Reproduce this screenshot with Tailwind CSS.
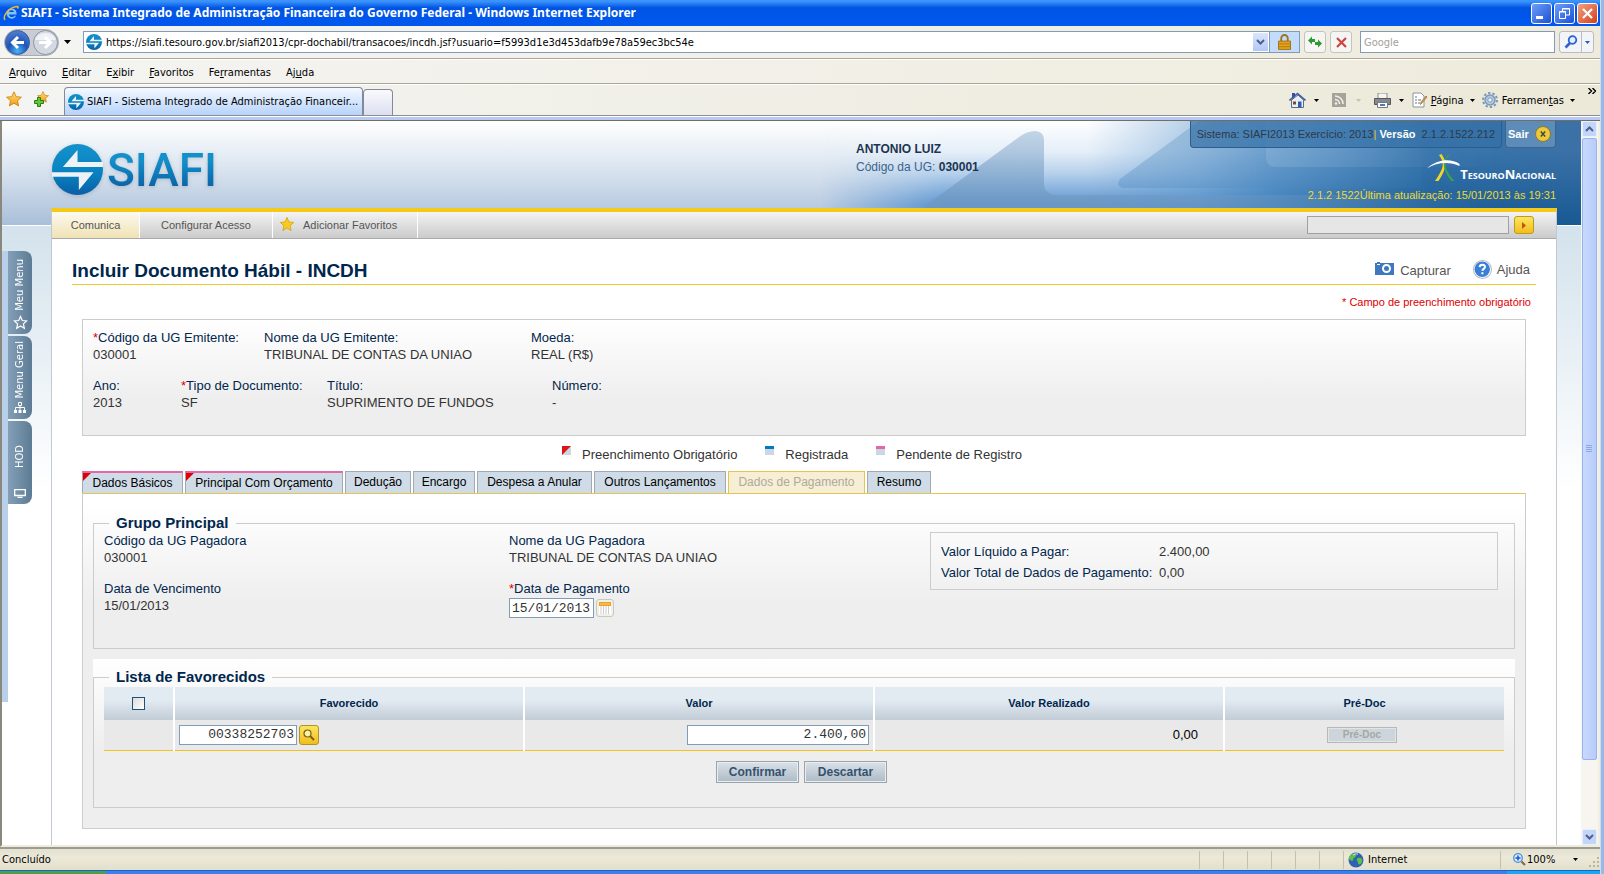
<!DOCTYPE html>
<html lang="pt-BR">
<head>
<meta charset="utf-8">
<title>SIAFI - Sistema Integrado de Administração Financeira do Governo Federal</title>
<script src="https://cdn.jsdelivr.net/npm/@tailwindcss/browser@4"></script>
</head>
<body class="flex h-screen overflow-hidden bg-[#9ab8e4] font-['Liberation_Sans',Arial,sans-serif] text-[13px] leading-[17px] text-[#333]">
<svg class="absolute size-0" aria-hidden="true">
  <defs>
    <linearGradient id="orb" x1="0" y1="0" x2="0" y2="1"><stop offset="0" stop-color="#1492cc"/><stop offset="0.6" stop-color="#0880bf"/><stop offset="1" stop-color="#0a5ea6"/></linearGradient>
    <linearGradient id="star" x1="0" y1="0" x2="0" y2="1"><stop offset="0" stop-color="#ffe07a"/><stop offset="1" stop-color="#f59a12"/></linearGradient>
    <symbol id="siafi" viewBox="0 0 50 50">
      <circle cx="25" cy="25" r="25" fill="url(#orb)"/>
      <path d="M10.700 22.500 L25 6 V17.700 H50 V22.500Z M0 27.700 H40.700 L26.300 45 V32 H0Z" fill="#edf2f7"/>
    </symbol>
    <symbol id="favstar" viewBox="0 0 16 16"><path d="M8 .8l2.200 4.900 5.200.5-3.900 3.500 1.100 5.200L8 12.200l-4.600 2.700 1.100-5.200L.6 6.200l5.200-.5z" fill="url(#star)" stroke="#c98412" stroke-width=".9"/></symbol>
    <symbol id="caret" viewBox="0 0 7 4"><path d="M0 0h7L3.500 4z" fill="currentColor"/></symbol>
  </defs>
</svg>

<div class="flex min-w-0 flex-1 flex-col bg-[#ece9d8]">
  <!-- Window title bar -->
  <div class="flex h-[26px] shrink-0 items-center bg-linear-to-b from-[#3b93fd] from-5% via-[#0054e3] via-30% to-[#0058f0] pl-[3px] pr-[2px]">
    <svg class="size-4" viewBox="0 0 16 16"><path d="M13.500 9.500H6c.2 3 4.400 3.300 5.500 1.300H13c-2 4.600-9.300 3.500-9.300-2.500S12.800 2 13.500 7.500zM6 7h5c-.3-2.500-4.600-2.500-5 0z" fill="#7fc4f6"/><path d="M2 15C-.5 12 5 2 14.500 1.500c1 .3.500 1.500 0 2" fill="none" stroke="#e2b93c" stroke-width="1.500"/></svg>
    <h1 class="ml-[2px] flex-1 truncate font-['Noto_Sans','Open_Sans',sans-serif] text-[12px] font-bold leading-[20px] text-white">SIAFI - Sistema Integrado de Administração Financeira do Governo Federal - Windows Internet Explorer</h1>
    <div class="flex gap-[2px]">
      <button type="button" aria-label="Minimizar" class="size-[21px] rounded-[3px] border border-white bg-linear-to-br from-[#6f9df7] to-[#1c4fd6]"><svg class="size-full" viewBox="0 0 19 19"><path d="M4 12h7v3H4z" fill="#fff"/></svg></button>
      <button type="button" aria-label="Restaurar" class="size-[21px] rounded-[3px] border border-white bg-linear-to-br from-[#6f9df7] to-[#1c4fd6]"><svg class="size-full" viewBox="0 0 19 19" fill="none" stroke="#fff"><path d="M4.500 7.500h6v7h-6zM4 8h7M7.500 7V4.500h7v6.500H11M7 5h8" /></svg></button>
      <button type="button" aria-label="Fechar" class="size-[21px] rounded-[3px] border border-white bg-linear-to-br from-[#f0a080] to-[#d23a14]"><svg class="size-full" viewBox="0 0 19 19"><path d="M5 5l9 9M14 5l-9 9" stroke="#fff" stroke-width="2.200"/></svg></button>
    </div>
  </div>

  <!-- Address bar -->
  <div class="flex h-[33px] shrink-0 items-center border-b border-[#aca899] bg-linear-to-r from-[#f4f4f2] to-[#efebdc] pl-[4px] pr-[6px] font-['DejaVu_Sans_Condensed','DejaVu_Sans',sans-serif] text-[11px] text-black">
    <div class="flex items-center rounded-full border border-[#a9adb3] bg-[#c9cdd3]">
      <button type="button" aria-label="Voltar" class="size-[25px]"><svg viewBox="0 0 25 25"><defs><radialGradient id="bk" cx=".5" cy=".85" r=".9"><stop offset="0" stop-color="#4bb4f4"/><stop offset=".45" stop-color="#1c55b8"/><stop offset="1" stop-color="#5b86d2"/></radialGradient></defs><circle cx="12.500" cy="12.500" r="12" fill="url(#bk)" stroke="#3a5c9e"/><path d="M19 12.500H8M13 7l-5.500 5.500L13 18" fill="none" stroke="#fff" stroke-width="3"/></svg></button>
      <button type="button" aria-label="Avançar" class="ml-[3px] size-[25px]"><svg viewBox="0 0 25 25"><circle cx="12.500" cy="12.500" r="12" fill="#d3d9e2" stroke="#8d949e"/><path d="M2 10a11 10 0 0 1 21 0z" fill="#eff2f6"/><path d="M6 12.500H17M12 7l5.500 5.500L12 18" fill="none" stroke="#fff" stroke-width="3"/></svg></button>
    </div>
    <svg class="ml-[5px] h-[4px] w-[7px]"><use href="#caret"/></svg>
    <div class="ml-[12px] flex h-[22px] flex-1 items-center border border-[#7f9db9] bg-white pl-[2px]">
      <svg class="size-4"><use href="#siafi"/></svg>
      <input aria-label="Endereço" class="ml-1 min-w-0 flex-1 outline-none" value="https://siafi.tesouro.gov.br/siafi2013/cpr-dochabil/transacoes/incdh.jsf?usuario=f5993d1e3d453dafb9e78a59ec3bc54e">
      <button type="button" aria-label="Abrir lista" class="flex h-[18px] w-[15px] items-center justify-center bg-linear-to-b from-[#dbe5fd] to-[#b3c8f6]"><svg class="h-[6px] w-[9px]" viewBox="0 0 9 6"><path d="M1 1l3.500 3.500L8 1" fill="none" stroke="#4d6185" stroke-width="2"/></svg></button>
      <div class="ml-[1px] flex h-full w-[30px] items-center justify-center border-l border-[#7f9db9] bg-[#c4dcfb]"><svg class="h-[16px] w-[13px]" viewBox="0 0 14 17"><path d="M3.500 8V4.500a3.500 3.500 0 0 1 7 0V8" fill="none" stroke="#9c7420" stroke-width="2"/><path d="M.5 7.500h13v9H.5z" fill="#e2a31a" stroke="#a06d10"/><path d="M1 10.500h12M1 13.500h12" stroke="#b57a12"/></svg></div>
    </div>
    <button type="button" aria-label="Atualizar" class="ml-[4px] flex size-[22px] items-center justify-center rounded-[3px] border border-[#c3c3c0] bg-[#f5f5f3]"><svg class="h-[12px] w-[14px]" viewBox="0 0 14 12" fill="#2e9a2e"><path d="M0 4L4 0V2.500H6.500V.5H4.500V8z" opacity="0"/><path d="M0 4.500L4 .5V3h3v3H4v2.500zM14 7.500L10 3.500V6H7v3h3v2.500z"/></svg></button>
    <button type="button" aria-label="Parar" class="ml-[4px] flex size-[22px] items-center justify-center rounded-[3px] border border-[#c3c3c0] bg-[#f5f5f3]"><svg class="size-[11px]" viewBox="0 0 11 11"><path d="M1 1l9 9M10 1L1 10" stroke="#cf4444" stroke-width="2.200"/></svg></button>
    <input aria-label="Pesquisa" placeholder="Google" class="ml-[8px] h-[22px] w-[195px] border border-[#7f9db9] bg-white px-[3px] placeholder:text-[#a3a09a]">
    <div class="ml-[4px] flex h-[22px] rounded-[3px] border border-[#b9bcc4] bg-[#f2f4f8]">
      <button type="button" aria-label="Pesquisar" class="flex w-[21px] items-center justify-center"><svg class="size-[14px]" viewBox="0 0 14 14"><circle cx="8.500" cy="5" r="3.800" fill="#e4efff" stroke="#2d62cf" stroke-width="1.800"/><path d="M6 8l-4.500 4.500" stroke="#2d62cf" stroke-width="2.600"/></svg></button>
      <button type="button" aria-label="Opções de pesquisa" class="flex w-[12px] items-center justify-center border-l border-[#b9bcc4] text-[#2457c5]"><svg class="h-[3px] w-[5px]" viewBox="0 0 7 4"><use href="#caret"/></svg></button>
    </div>
  </div>

  <!-- Menu bar -->
  <nav class="flex h-[25px] shrink-0 items-center gap-[15px] border-b border-t border-b-[#aca899] border-t-white bg-linear-to-r from-[#f4f4f2] to-[#efebdc] pl-[9px] pt-px font-['DejaVu_Sans_Condensed','DejaVu_Sans',sans-serif] text-[11px] text-black">
    <a href="#"><u>A</u>rquivo</a><a href="#"><u>E</u>ditar</a><a href="#">E<u>x</u>ibir</a><a href="#"><u>F</u>avoritos</a><a href="#">Fe<u>r</u>ramentas</a><a href="#">Aj<u>u</u>da</a>
  </nav>

  <!-- Browser tabs and command bar -->
  <div class="flex h-[32px] shrink-0 items-end border-b border-t border-b-[#8f8f8f] border-t-white bg-linear-to-r from-[#f4f4f2] to-[#ece9d8] pl-[6px] pr-[4px] font-['DejaVu_Sans_Condensed','DejaVu_Sans',sans-serif] text-[11px] text-black">
    <svg class="mb-2 size-4"><use href="#favstar"/></svg>
    <svg class="mb-2 ml-[11px] size-4" viewBox="0 0 16 16"><use href="#favstar" x="4" y="0" width="12" height="12"/><path d="M4.500 6.500h3v3h3v3h-3v3h-3v-3h-3v-3h3z" fill="#62c63a" stroke="#2b7d16"/></svg>
    <div class="ml-[15px] flex h-[28px] w-[299px] items-center rounded-t-[4px] border border-b-0 border-[#84889a] bg-linear-to-b from-[#f4f9ff] to-[#b6d3fb] pl-[3px]">
      <svg class="size-4"><use href="#siafi"/></svg>
      <span class="ml-[3px] truncate">SIAFI - Sistema Integrado de Administração Financeir...</span>
    </div>
    <button type="button" aria-label="Nova guia" class="h-[26px] w-[30px] rounded-t-[4px] border border-b-0 border-[#84889a] bg-linear-to-b from-[#fafafd] to-[#dcdff0]"></button>
    <div class="ml-auto flex items-center pb-[3px]">
      <svg class="size-[17px]" viewBox="0 0 17 17"><path d="M2.500 8v7.500h12V8L9 3z" fill="#e9edf4" stroke="#5c6c88"/><path d="M.5 8.500L8.500 1.500l8 7" fill="none" stroke="#3f5c9c" stroke-width="1.600"/><path d="M3 1h3v3L3 6z" fill="#3a4ea0"/><path d="M9 9.500h3.500v6H9z" fill="#2d5fa8"/><path d="M4 9.500h3v3H4z" fill="#7a4c38"/></svg>
      <svg class="ml-[8px] h-[3px] w-[5px]"><use href="#caret"/></svg>
      <svg class="ml-[13px] size-[14px]" viewBox="0 0 14 14"><path d="M0 0h14v14H0z" fill="#a5a49c"/><path d="M3 3a8 8 0 0 1 8 8M3 6.500a4.500 4.500 0 0 1 4.500 4.500" fill="none" stroke="#f3f1e8" stroke-width="1.500"/><circle cx="4" cy="10.500" r="1.200" fill="#f3f1e8"/></svg>
      <svg class="ml-[10px] h-[3px] w-[5px] text-[#c5c2b4]"><use href="#caret"/></svg>
      <svg class="ml-[13px] h-[15px] w-[17px]" viewBox="0 0 17 15"><path d="M4 0h9v6H4z" fill="#f5f5f5" stroke="#8a8a8a"/><path d="M.5 5.500h16v6H.5z" fill="#85888c" stroke="#55585c"/><path d="M3.500 9.500h10v5h-10z" fill="#fff" stroke="#77797c"/><path d="M6 12h5" stroke="#4e79c0" stroke-width="2"/></svg>
      <svg class="ml-[8px] h-[3px] w-[5px]"><use href="#caret"/></svg>
      <svg class="ml-[8px] size-4" viewBox="0 0 16 16"><path d="M1 1h8l3 3v11H1z" fill="#fff" stroke="#8f939b"/><path d="M3 5h2M3 8h2M3 11h2M6 8h3M6 11h2" stroke="#63738f"/><path d="M15 5l-5 6-1.500 1.500L9 10l5-6z" fill="#e2a64c" stroke="#8d6a33" stroke-width=".7"/></svg>
      <a href="#" class="ml-[3px]"><u>P</u>ágina</a>
      <svg class="ml-[6px] h-[3px] w-[5px]"><use href="#caret"/></svg>
      <svg class="ml-[7px] size-4" viewBox="0 0 16 16"><circle cx="8" cy="8" r="7" fill="none" stroke="#7f97b3" stroke-width="2" stroke-dasharray="2.400 2"/><circle cx="8" cy="8" r="5" fill="#a9cdec" stroke="#7f97b3" stroke-width="1.500"/><circle cx="8" cy="8" r="2.200" fill="#f3f1e8" stroke="#7f97b3"/></svg>
      <a href="#" class="ml-[4px]">Ferramen<u>t</u>as</a>
      <svg class="ml-[6px] h-[3px] w-[5px]"><use href="#caret"/></svg>
      <svg class="mb-[18px] ml-[13px] h-[6px] w-[8px]" viewBox="0 0 8 6"><path d="M.5 0l3 3-3 3M4.500 0l3 3-3 3" fill="none" stroke="#000" stroke-width="1.400"/></svg>
    </div>
  </div>
  <div class="h-[5px] shrink-0 border-b border-t border-b-[#716f64] border-t-white bg-[#b8c9f4]"></div>

  <!-- Page viewport -->
  <div class="flex min-h-0 flex-1 border-x-2 border-b-2 border-b-[#eeecdf] border-l-[#8a887c] border-r-[#f1efe2]">
    <div class="relative flex min-w-0 flex-1 overflow-hidden bg-linear-to-b from-[#d3e2ec] from-[104px] to-white to-[370px]">
      <div class="absolute inset-x-0 top-0 h-[105px] border-b border-white bg-linear-to-b from-white via-[#dbe5f0] via-45% to-[#a9bfd9]">
        <svg class="absolute right-0 top-0 h-[104px] w-[760px]" viewBox="0 0 760 104" preserveAspectRatio="none">
          <defs>
            <linearGradient id="sky" x1="0" y1="0" x2="0" y2="1"><stop offset="0" stop-color="#fff"/><stop offset=".3" stop-color="#e4eef8"/><stop offset=".5" stop-color="#b7d1ec"/><stop offset=".8" stop-color="#5e96d0"/><stop offset="1" stop-color="#5a94cc"/></linearGradient>
            <linearGradient id="fade"><stop offset="0" stop-color="#000"/><stop offset=".16" stop-color="#fff"/></linearGradient>
            <linearGradient id="deep"><stop offset=".35" stop-color="#5b97cf" stop-opacity="0"/><stop offset=".6" stop-color="#4788c2" stop-opacity=".75"/><stop offset=".8" stop-color="#3674ac"/><stop offset="1" stop-color="#3b71a6"/></linearGradient>
            <linearGradient id="low" x1="0" y1="0" x2="0" y2="1"><stop offset=".3" stop-color="#125590" stop-opacity="0"/><stop offset="1" stop-color="#125590" stop-opacity=".85"/></linearGradient>
            <linearGradient id="lowx"><stop offset=".5" stop-color="#000"/><stop offset=".85" stop-color="#fff"/></linearGradient>
            <linearGradient id="glass" x1="0" y1="0" x2="0" y2="1"><stop offset="0" stop-color="#fff" stop-opacity=".12"/><stop offset="1" stop-color="#fff" stop-opacity=".22"/></linearGradient>
            <linearGradient id="hill" x1="0" y1="0" x2="0" y2="1"><stop offset="0" stop-color="#7ea4c8" stop-opacity=".42"/><stop offset="1" stop-color="#6b95bf" stop-opacity=".8"/></linearGradient>
            <linearGradient id="hillfade"><stop offset=".35" stop-color="#fff"/><stop offset=".9" stop-color="#000"/></linearGradient>
            <mask id="m1"><path d="M0 0h760v104H0z" fill="url(#fade)"/></mask>
            <mask id="m2"><path d="M0 0h760v104H0z" fill="url(#lowx)"/></mask>
            <mask id="m3"><path d="M0 0h760v104H0z" fill="url(#hillfade)"/></mask>
          </defs>
          <path d="M0 0h760v104H0z" fill="url(#sky)" mask="url(#m1)"/>
          <path d="M0 0h760v104H0z" fill="url(#deep)"/>
          <path d="M0 0h760v104H0z" fill="url(#low)" mask="url(#m2)"/>
          <path d="M82 104 L100 88 L198 16 Q206 10 214 10 Q223 10 223 20 V62 Q223 74 236 74 H760 V104z" fill="url(#hill)" mask="url(#m3)"/>
          <path d="M378 0 L299 58 Q294 66 303 67 H600 V0z" fill="#4f89be" opacity=".38" mask="url(#m3)"/>
          <path d="M445 0 V36 Q445 46 455 46 H700 V0z" fill="url(#glass)" mask="url(#m3)"/>
        </svg>
      </div>

      <!-- Side menu -->
      <aside class="relative w-[49px] shrink-0 pt-[130px] font-['DejaVu_Sans',Verdana,sans-serif] text-[10px] leading-[14px] text-white">
        <div class="flex h-[451px] w-[30px] flex-col gap-[2px] border-l-[6px] border-[#b9d0ea] text-center">
          <a href="#" class="flex h-[83px] flex-col items-center justify-between rounded-r-[8px] bg-linear-to-r from-[#84a0b8] to-[#5d7b94] pb-1 pt-[8px]"><span class="rotate-180 [writing-mode:vertical-rl]">Meu Menu</span><svg class="size-[15px]" viewBox="0 0 15 15"><path d="M7.500 1.500l1.800 4 4.300.5-3.200 2.900.9 4.300-3.800-2.200-3.800 2.200.9-4.300L1.400 6l4.300-.5z" fill="none" stroke="#fff" stroke-width="1.200"/></svg></a>
          <a href="#" class="flex h-[83px] flex-col items-center justify-between rounded-r-[8px] bg-linear-to-r from-[#84a0b8] to-[#5d7b94] pb-[5px] pt-[5px]"><span class="rotate-180 [writing-mode:vertical-rl]">Menu Geral</span><svg class="h-[12px] w-[14px]" viewBox="0 0 14 12"><path d="M5.500.5h3v3h-3zM7 3.500V8M2.500 8V5.500h9V8" fill="none" stroke="#fff"/><path d="M1 8h3v3H1zM5.500 8h3v3h-3zM10 8h3v3h-3z" fill="#fff"/></svg></a>
          <a href="#" class="flex h-[83px] flex-col items-center justify-between rounded-r-[8px] bg-linear-to-r from-[#84a0b8] to-[#5d7b94] pb-[6px] pt-[24px]"><span class="rotate-180 [writing-mode:vertical-rl]">HOD</span><svg class="h-[9px] w-[12px]" viewBox="0 0 12 9"><path d="M.7.700h10.600v5.800H.7zM3.500 8.300h5" fill="none" stroke="#fff" stroke-width="1.300"/></svg></a>
        </div>
      </aside>

      <main class="relative flex min-w-0 flex-1 flex-col">
        <header class="flex h-[87px] shrink-0 pr-px text-[12px] leading-[18px]">
          <a href="#" aria-label="SIAFI" class="flex w-[805px] shrink pl-[1px] pt-[23px]">
            <svg class="size-[51px] shrink-0 drop-shadow-sm"><use href="#siafi"/></svg>
            <span class="ml-[4px] h-[54px] bg-linear-to-b from-[#1390cb] from-30% to-[#0a5298] bg-clip-text font-['Roboto',sans-serif] text-[46px] font-medium leading-[52px] text-transparent drop-shadow-sm">SIAFI</span>
          </a>
          <div class="pt-[19px] font-bold text-[#1c3551]">
            <p>ANTONIO LUIZ</p>
            <p><span class="font-normal text-[#3c648c]">Código da UG:</span> 030001</p>
          </div>
          <div class="ml-auto flex flex-col items-end">
            <div class="flex gap-[3px] leading-[20px]">
              <p class="h-[27px] rounded-b-[4px] border border-t-0 border-[#2d5d8c] bg-[#3470a6]/70 px-[6px] pt-[3px] text-[11px] text-[#2b3b4b]">Sistema: SIAFI2013 Exercício: 2013<span class="text-[#e5c62c]">|</span> <b class="text-white">Versão</b>&nbsp; 2.1.2.1522.212</p>
              <button type="button" class="flex h-[27px] w-[51px] items-start justify-between rounded-b-[4px] border border-t-0 border-[#3a658f] bg-[#5e8cb8] pl-[2px] pr-[4px] pt-[3px] text-[11px] font-bold leading-[20px] text-white">Sair <svg class="mt-[2px] size-[16px]" viewBox="0 0 16 16"><circle cx="8" cy="8" r="7.500" fill="#ecc93a" stroke="#8c7a2c"/><path d="M5.800 5.500l4.400 5M10.200 5.500l-4.400 5" stroke="#444" stroke-width="1.400"/></svg></button>
            </div>
            <div class="mt-[6px] flex h-[28px] items-end text-white">
              <svg class="h-[28px] w-[33px]" viewBox="0 0 33 28"><path d="M12 1C18 9 17 14 8 27h3.500C20 14 20 8 14.500 0z" fill="#f5d327"/><path d="M23.500 0c-8 7-7 14 4 27H24C15 14 15 8 21 1z" fill="#39a544"/><path d="M0 14.500C10 5 24 4 32.500 10v2C24 8 11 7 0 14.500z" fill="#fff"/></svg>
              <b class="font-['Open_Sans',sans-serif] text-[13px] leading-[16px] [font-variant:small-caps]">TesouroNacional</b>
            </div>
            <p class="mt-[6px] text-[11px] leading-[14px] text-[#ecd92f]">2.1.2 1522Última atualização: 15/01/2013 às 19:31</p>
          </div>
        </header>

        <div class="flex-1 border-x border-t-4 border-x-[#c3c9d0] border-t-[#f5c917] bg-white">
          <nav class="flex h-[27px] items-center border-b border-[#aaa] bg-linear-to-b from-[#f3f3f3] to-[#cbcbcb] text-[11px] text-[#555]">
            <a href="#" class="flex h-full w-[88px] items-center justify-center border-r border-white bg-linear-to-b from-[#fdfaf0] to-[#efe2b4] pt-px">Comunica</a>
            <a href="#" class="flex h-full w-[133px] items-center justify-center border-r border-white pt-px">Configurar Acesso</a>
            <a href="#" class="flex h-full w-[145px] items-center border-r border-white pl-[7px] pt-px"><svg class="mb-1 size-[14px]" viewBox="0 0 16 16"><path d="M8 .5l2.200 5.200 5.500.5-4.200 3.700 1.300 5.600L8 12.500l-4.800 3 1.300-5.600L.3 6.200l5.500-.5z" fill="#f7cc1f" stroke="#d9a514"/></svg><span class="ml-[9px]">Adicionar Favoritos</span></a>
            <form class="ml-auto flex items-center gap-[5px] pr-[22px]">
              <input aria-label="Busca" class="h-[18px] w-[202px] border border-[#a0a0a0] bg-[#e6e6e6]">
              <button type="button" aria-label="Buscar" class="flex h-[18px] w-[20px] items-center justify-center rounded-[3px] border border-[#bf9a1c] bg-linear-to-b from-[#fbe65c] to-[#f2bd16]"><svg class="h-[7px] w-[4px]" viewBox="0 0 4 7"><path d="M0 0l4 3.500L0 7z" fill="#c8500e"/></svg></button>
            </form>
          </nav>

          <div class="px-[20px]">
            <div class="flex h-[46px] items-end border-b border-[#f0c82d] pb-[3px] text-[#555]">
              <h2 class="flex-1 text-[19px] font-bold leading-[20px] text-[#00264d]">Incluir Documento Hábil - INCDH</h2>
              <a href="#" class="mb-[2px] flex items-center"><svg class="mb-1 mr-[6px] h-[13px] w-[19px]" viewBox="0 0 19 13"><path d="M0 1h2V0h3v1h14v12H0z" fill="#3e79bd"/><path d="M2 2.500h3" stroke="#fff"/><circle cx="11.500" cy="6.500" r="3.500" fill="#3e79bd" stroke="#fff" stroke-width="2"/></svg>Capturar</a>
              <a href="#" class="mb-[2px] ml-[22px] mr-[6px] flex items-center"><svg class="mr-[5px] size-[19px]" viewBox="0 0 18 18"><circle cx="9" cy="9" r="8.500" fill="#fff" stroke="#b5bac2"/><circle cx="8.800" cy="8.800" r="7.300" fill="#3a7fd6"/><path d="M6.300 6.800c.2-3.400 5.400-3 5 0-.2 1.600-2.300 1.600-2.400 3.400M8.900 11.600v1.900" fill="none" stroke="#fff" stroke-width="1.900"/></svg>Ajuda</a>
            </div>
            <p class="pr-[5px] pt-[9px] text-right text-[11px] leading-[16px] text-[#dc0000]">* Campo de preenchimento obrigatório</p>

            <section class="mx-[10px] mt-[9px] border border-[#ccc] bg-linear-to-b from-white to-[#eee] to-70% px-[10px] pb-[24px] pt-[9px]">
              <dl class="flex">
                <div class="w-[171px]"><dt class="text-[#00264d]"><span class="text-[#e00000]">*</span>Código da UG Emitente:</dt><dd>030001</dd></div>
                <div class="w-[267px]"><dt class="text-[#00264d]">Nome da UG Emitente:</dt><dd>TRIBUNAL DE CONTAS DA UNIAO</dd></div>
                <div><dt class="text-[#00264d]">Moeda:</dt><dd>REAL (R$)</dd></div>
              </dl>
              <dl class="mt-[14px] flex">
                <div class="w-[88px]"><dt class="text-[#00264d]">Ano:</dt><dd>2013</dd></div>
                <div class="w-[146px]"><dt class="text-[#00264d]"><span class="text-[#e00000]">*</span>Tipo de Documento:</dt><dd>SF</dd></div>
                <div class="w-[225px]"><dt class="text-[#00264d]">Título:</dt><dd>SUPRIMENTO DE FUNDOS</dd></div>
                <div><dt class="text-[#00264d]">Número:</dt><dd>-</dd></div>
              </dl>
            </section>

            <ul class="mt-[9px] flex justify-center gap-[28px] pr-[24px] leading-[19px]">
              <li class="flex gap-[11px]"><svg class="mt-[1px] size-[9px]" viewBox="0 0 9 9"><path d="M0 0h9v9H0z" fill="#cbd8e4"/><path d="M0 0h9L0 9z" fill="#e01414"/></svg>Preenchimento Obrigatório</li>
              <li class="flex gap-[11px]"><svg class="mt-[1px] size-[9px]" viewBox="0 0 9 9"><path d="M0 0h9v9H0z" fill="#cbd8e4"/><path d="M0 0h9v3H0z" fill="#007ac2"/></svg>Registrada</li>
              <li class="flex gap-[11px]"><svg class="mt-[1px] size-[9px]" viewBox="0 0 9 9"><path d="M0 0h9v9H0z" fill="#cbd8e4"/><path d="M0 0h9v3H0z" fill="#e468a8"/></svg>Pendente de Registro</li>
            </ul>

            <div role="tablist" class="mx-[10px] mt-[7px] flex gap-[2px] text-[12px] text-black">
              <button type="button" role="tab" class="relative h-[22px] w-[101px] border-x border-t-2 border-x-[#a3a9b1] border-t-[#e468a8] bg-[#cfdbe7]"><svg class="absolute left-0 top-0 size-[8px]" viewBox="0 0 8 8"><path d="M0 0h8L0 8z" fill="#e00000"/></svg>Dados Básicos</button>
              <button type="button" role="tab" class="relative h-[22px] w-[158px] border-x border-t-2 border-x-[#a3a9b1] border-t-[#e468a8] bg-[#cfdbe7]"><svg class="absolute left-0 top-0 size-[8px]" viewBox="0 0 8 8"><path d="M0 0h8L0 8z" fill="#e00000"/></svg>Principal Com Orçamento</button>
              <button type="button" role="tab" class="h-[22px] w-[66px] border border-b-0 border-[#a3a9b1] bg-[#cfdbe7]">Dedução</button>
              <button type="button" role="tab" class="h-[22px] w-[62px] border border-b-0 border-[#a3a9b1] bg-[#cfdbe7]">Encargo</button>
              <button type="button" role="tab" class="h-[22px] w-[115px] border border-b-0 border-[#a3a9b1] bg-[#cfdbe7]">Despesa a Anular</button>
              <button type="button" role="tab" class="h-[22px] w-[132px] border border-b-0 border-[#a3a9b1] bg-[#cfdbe7]">Outros Lançamentos</button>
              <button type="button" role="tab" aria-selected="true" disabled class="h-[22px] w-[137px] border border-b-0 border-[#e6c44d] bg-[#f6eed5] text-[#b0aa99]">Dados de Pagamento</button>
              <button type="button" role="tab" class="h-[22px] w-[64px] border border-b-0 border-[#a3a9b1] bg-[#cfdbe7]">Resumo</button>
            </div>

            <section class="mx-[10px] border border-[#ccc] border-t-[#e6c44d] bg-linear-to-b from-white from-[10px] to-[#eee] to-[110px] px-[10px] py-[20px]">
              <fieldset class="border border-[#ccc] pb-[30px] pl-[10px] pr-[16px]">
                <legend class="ml-[5px] px-[7px] text-[15px] font-bold leading-[18px] text-[#00264d]">Grupo Principal</legend>
                <div class="grid grid-cols-[405fr_421fr_568fr]">
                  <dl><dt class="text-[#00264d]">Código da UG Pagadora</dt><dd>030001</dd><dt class="mt-[14px] text-[#00264d]">Data de Vencimento</dt><dd>15/01/2013</dd></dl>
                  <div>
                    <dl><dt class="text-[#00264d]">Nome da UG Pagadora</dt><dd>TRIBUNAL DE CONTAS DA UNIAO</dd></dl>
                    <label for="dt" class="mt-[14px] block text-[#00264d]"><span class="text-[#e00000]">*</span>Data de Pagamento</label>
                    <div class="mt-px flex items-center gap-[2px]">
                      <input id="dt" value="15/01/2013" class="h-[20px] w-[85px] border border-[#7f9db9] bg-white px-[2px] font-['Liberation_Mono','Courier_New',monospace] text-[13px]">
                      <button type="button" aria-label="Calendário" class="flex size-[18px] items-center justify-center rounded-[3px] border border-[#cbc8bd] bg-[#f0efe9]"><svg class="size-[12px]" viewBox="0 0 12 12"><path d="M0 4h12v8H0z" fill="#fff"/><path d="M0 0h12v4H0z" fill="#f0a01f"/><path d="M2 4v8M4.500 4v8M7 4v8M9.500 4v8" stroke="#ccc"/><path d="M1 2h10" stroke="#f9d185"/></svg></button>
                    </div>
                  </div>
                  <dl class="grid grid-cols-[218px_1fr] self-start border border-[#ccc] px-[10px] pb-[6px] pt-[8px] leading-[21px]">
                    <dt class="text-[#00264d]">Valor Líquido a Pagar:</dt><dd>2.400,00</dd>
                    <dt class="text-[#00264d]">Valor Total de Dados de Pagamento:</dt><dd>0,00</dd>
                  </dl>
                </div>
              </fieldset>

              <div class="mt-[10px] bg-linear-to-b from-white to-[#eee] to-[90px] pt-[9px]">
                <fieldset class="border border-[#ccc] px-[10px] pb-[24px]">
                  <legend class="ml-[5px] px-[7px] text-[15px] font-bold leading-[18px] text-[#00264d]">Lista de Favorecidos</legend>
                  <table class="mt-px w-full table-fixed border-b border-[#f0c21d] text-[11px] text-[#00264d]">
                    <thead>
                      <tr class="h-[33px] bg-linear-to-b from-[#e3ebf2] from-40% to-[#c1ccd6]">
                        <th class="w-[5%]"><input type="checkbox" aria-label="Selecionar todos" class="block size-[13px] mx-auto appearance-none border border-[#1c5180] bg-linear-to-br from-[#dcdcd7] to-white"></th>
                        <th class="w-[25%] border-l-2 border-white">Favorecido</th>
                        <th class="w-[25%] border-l-2 border-white">Valor</th>
                        <th class="w-[25%] border-l-2 border-white">Valor Realizado</th>
                        <th class="w-[20%] border-l-2 border-white">Pré-Doc</th>
                      </tr>
                    </thead>
                    <tbody>
                      <tr class="h-[30px] bg-[#e9e9e9]">
                        <td></td>
                        <td class="border-l-2 border-white pl-1"><div class="flex items-center gap-[2px]"><input aria-label="Favorecido" value="00338252703" class="h-[20px] w-[118px] border border-[#7f9db9] bg-white px-[2px] text-right font-['Liberation_Mono','Courier_New',monospace] text-[13px] text-[#333]"><button type="button" aria-label="Pesquisar favorecido" class="flex size-[20px] items-center justify-center rounded-[3px] border border-[#b3922a] bg-linear-to-b from-[#fbe65c] to-[#f2bd16]"><svg class="size-[12px]" viewBox="0 0 12 12"><circle cx="4.500" cy="4.500" r="3.500" fill="#fbf0a8" stroke="#7a5f12" stroke-width="1.200"/><path d="M7 7l4 4" stroke="#7a5f12" stroke-width="2"/></svg></button></div></td>
                        <td class="border-l-2 border-white pr-1 text-right"><input aria-label="Valor" value="2.400,00" class="h-[20px] w-[182px] border border-[#7f9db9] bg-white px-[2px] text-right font-['Liberation_Mono','Courier_New',monospace] text-[13px] text-[#333]"></td>
                        <td class="border-l-2 border-white pr-[25px] text-right text-[13px] text-black">0,00</td>
                        <td class="border-l-2 border-white pr-[5px] text-center"><button type="button" disabled class="h-[16px] w-[70px] border border-[#b8b8b8] bg-[#ccd5de] text-[10px] font-bold leading-[12px] text-[#a7a79d] ring-1 ring-inset ring-[#e5e5e0]">Pré-Doc</button></td>
                      </tr>
                    </tbody>
                  </table>
                  <div class="mt-[10px] flex justify-center gap-[5px] pr-[5px] text-[12px] font-bold text-[#34526f]">
                    <button type="button" class="h-[22px] w-[83px] border border-[#9ba3ab] bg-linear-to-b from-[#dae2e9] to-[#adbac5] leading-[18px] ring-1 ring-inset ring-[#e8edf1]">Confirmar</button>
                    <button type="button" class="h-[22px] w-[83px] border border-[#9ba3ab] bg-linear-to-b from-[#dae2e9] to-[#adbac5] leading-[18px] ring-1 ring-inset ring-[#e8edf1]">Descartar</button>
                  </div>
                </fieldset>
              </div>
            </section>
          </div>
        </div>
      </main>
      <div class="w-[24px] shrink-0"></div>
    </div>

    <!-- Vertical scrollbar -->
    <div class="flex w-[17px] shrink-0 flex-col bg-[#f6f5f0] px-[1px]">
      <button type="button" aria-label="Rolar para cima" class="flex h-[16px] shrink-0 items-center justify-center rounded-[2px] border border-[#e8eefc] bg-[#c4d5fb]"><svg class="h-[6px] w-[9px]" viewBox="0 0 9 6"><path d="M1 5l3.500-3.500L8 5" fill="none" stroke="#4d6185" stroke-width="2"/></svg></button>
      <div class="mb-[69px] mt-[1px] flex flex-1 items-center justify-center rounded-[2px] border border-[#98b4ec] bg-linear-to-r from-[#c9d9fd] to-[#b8ccfb]"><svg class="h-[8px] w-[7px]" viewBox="0 0 7 8"><path d="M0 .5h6M0 2.500h6M0 4.500h6M0 6.500h6" stroke="#8ca8e6"/></svg></div>
      <button type="button" aria-label="Rolar para baixo" class="flex h-[16px] shrink-0 items-center justify-center rounded-[2px] border border-[#e8eefc] bg-[#c4d5fb]"><svg class="h-[6px] w-[9px]" viewBox="0 0 9 6"><path d="M1 1l3.500 3.500L8 1" fill="none" stroke="#4d6185" stroke-width="2"/></svg></button>
    </div>
  </div>

  <!-- Status bar -->
  <footer class="flex h-[23px] shrink-0 items-center border-t-2 border-[#9d9b8c] bg-linear-to-b from-[#e4e2d2] from-10% via-[#ece9d8] via-40% to-[#e2dfcd] font-['DejaVu_Sans_Condensed','DejaVu_Sans',sans-serif] text-[11px] text-black">
    <p class="flex-1 pl-[2px]">Concluído</p>
    <div class="flex h-[18px]"><i class="w-[24px] border-l border-[#c3c0ae]"></i><i class="w-[24px] border-l border-[#c3c0ae]"></i><i class="w-[24px] border-l border-[#c3c0ae]"></i><i class="w-[24px] border-l border-[#c3c0ae]"></i><i class="w-[24px] border-l border-[#c3c0ae]"></i><i class="w-[24px] border-l border-[#c3c0ae]"></i></div>
    <div class="flex h-[18px] w-[157px] items-center border-l border-[#c3c0ae] pl-[4px]"><svg class="size-4" viewBox="0 0 16 16"><circle cx="8" cy="8" r="7.500" fill="#2e62b4"/><path d="M4 2c3-1 5 0 4 2S5 6 5 8s-3 0-4-1 1-4 3-5zM10 6c3-1 5 1 4 4s-4 3-4 1-3-4 0-5z" fill="#5fbf4a"/><path d="M5 3a6 6 0 0 1 5-1" stroke="#cfe6ff" fill="none"/></svg><span class="ml-[4px]">Internet</span></div>
    <div class="flex h-[18px] w-[100px] items-center border-l border-[#c3c0ae] pl-[12px]"><svg class="size-[13px]" viewBox="0 0 13 13"><circle cx="5" cy="5" r="4.300" fill="#d7ebff" stroke="#4b8fd8" stroke-width="1.300"/><path d="M5 2.500v5M2.500 5h5" stroke="#1b57c9" stroke-width="1.500"/><path d="M8.500 8.500L12 12" stroke="#8a6a48" stroke-width="2.200"/></svg><span class="ml-px flex-1">100%</span><svg class="mr-[11px] h-[3px] w-[5px]"><use href="#caret"/></svg><svg class="mt-[6px] size-[11px]" viewBox="0 0 11 11" fill="#b8b5a2"><path d="M8 0h2v2H8zM4 4h2v2H4zM8 4h2v2H8zM0 8h2v2H0zM4 8h2v2H4zM8 8h2v2H8z"/></svg></div>
  </footer>
  <div class="flex h-[4px] shrink-0 border-t border-[#1f5fd0] bg-[#3a80e6]"><span class="w-[106px] bg-[#4aa14a]"></span><span class="ml-auto w-[93px] bg-[#18a8ec]"></span></div>
</div>

<!-- Edge of the neighbouring window -->
<div class="w-[4px] shrink-0 border-l border-[#cfdcf5] bg-[#9ab8e4]"></div>
</body>
</html>
